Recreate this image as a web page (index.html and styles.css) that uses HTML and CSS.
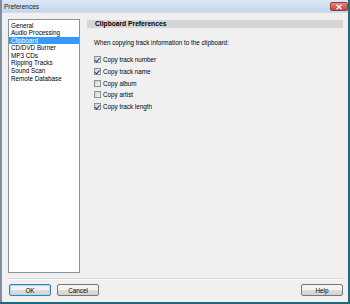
FILE: index.html
```html
<!DOCTYPE html>
<html lang="en">
<head>
  <meta charset="UTF-8" />
  <title>Preferences</title>
  <link rel="stylesheet" href="styles.css">
</head>
<body>
  <div class="window">
    <div class="titlebar">
      <span class="title">Preferences</span>
      <button class="close-btn" aria-label="Close">
        <svg width="8" height="6" viewBox="0 0 8 6"><path d="M1.5 0.8 L6.5 5.2 M6.5 0.8 L1.5 5.2" stroke="#fff" stroke-width="1.4"/></svg>
      </button>
    </div>

    <div class="client">
      <div class="main">
        <ul class="listbox">
          <li>General</li>
          <li>Audio Processing</li>
          <li class="selected">Clipboard</li>
          <li>CD/DVD Burner</li>
          <li>MP3 CDs</li>
          <li>Ripping Tracks</li>
          <li>Sound Scan</li>
          <li>Remote Database</li>
        </ul>

        <div class="panel">
          <div class="panel-header">Clipboard Preferences</div>
          <p class="intro">When copying track information to the clipboard:</p>
          <div class="options">
            <label class="option"><span class="check checked"></span>Copy track number</label>
            <label class="option"><span class="check checked"></span>Copy track name</label>
            <label class="option"><span class="check"></span>Copy album</label>
            <label class="option"><span class="check"></span>Copy artist</label>
            <label class="option"><span class="check checked"></span>Copy track length</label>
          </div>
        </div>
      </div>

      <div class="separator"></div>

      <div class="button-row">
        <div class="left-buttons">
          <button class="btn default">OK</button>
          <button class="btn">Cancel</button>
        </div>
        <button class="btn">Help</button>
      </div>
    </div>
  </div>
</body>
</html>
```

FILE: styles.css
```css
body {
  margin: 0;
  width: 350px;
  height: 304px;
  background: #1d6a7a;
  font-family: "Liberation Sans", Arial, sans-serif;
  font-size: 6.3px;
  color: #000;
  overflow: hidden;
}

.window {
  width: 346px;
  height: 302px;
  border-left: 2px solid #7f8e9e;
  background: #f0f0f0;
  display: flex;
  flex-direction: column;
}

.titlebar {
  height: 12px;
  flex: none;
  display: flex;
  align-items: center;
  justify-content: space-between;
  padding-left: 2px;
  background: linear-gradient(#dce7f4, #c3d6ec);
  border-bottom: 1px solid #cfdcea;
}

.title {
  font-size: 6.5px;
  color: #1a1a1a;
}

.close-btn {
  width: 18px;
  height: 9px;
  margin-top: 1px;
  padding: 0;
  border: 1px solid #9a3a34;
  border-radius: 2px;
  background: linear-gradient(#dd8a80, #c4473c);
  display: flex;
  align-items: center;
  justify-content: center;
}

.client {
  flex: 1;
  display: flex;
  flex-direction: column;
  padding: 6px 5px 0 6px;
}

.main {
  height: 254px;
  display: flex;
  gap: 7px;
}

.listbox {
  width: 70px;
  margin: 0;
  padding: 1.5px 0 0 0;
  list-style: none;
  background: #fff;
  border: 1px solid #8d939b;
}

.listbox li {
  height: 7.6px;
  line-height: 7.6px;
  padding-left: 2px;
  white-space: nowrap;
}

.listbox li.selected {
  background: #3399ff;
  color: #fff;
}

.panel {
  flex: 1;
  padding-top: 0.5px;
}

.panel-header {
  height: 8px;
  line-height: 8px;
  padding-left: 8px;
  background: #d6d6d6;
  font-weight: bold;
  font-size: 6.7px;
}

.intro {
  margin: 11px 0 0 7px;
  line-height: 8px;
}

.options {
  margin: 7.7px 0 0 7px;
  display: flex;
  flex-direction: column;
}

.option {
  height: 11.6px;
  display: flex;
  align-items: center;
  gap: 2px;
}

.check {
  width: 5px;
  height: 5px;
  border: 1px solid #8e8f8f;
  background: linear-gradient(135deg, #d2d2d2, #f6f6f6);
  display: flex;
  align-items: center;
  justify-content: center;
}

.check.checked {
  background: linear-gradient(135deg, #c9d6e6, #f4f7fb) ;
}

.check.checked::after {
  content: "";
  width: 1.5px;
  height: 3.5px;
  margin-top: -1px;
  border: solid #23389a;
  border-width: 0 1.2px 1.2px 0;
  transform: rotate(40deg);
}

.separator {
  margin-top: 5px;
  height: 1px;
  border-top: 1px solid #d9d9d9;
  background: #fcfcfc;
}

.button-row {
  margin-top: 4px;
  display: flex;
  justify-content: space-between;
  padding-left: 1px;
}

.left-buttons {
  display: flex;
  gap: 6px;
}

.btn {
  width: 42px;
  height: 12px;
  padding: 0;
  font-family: "Liberation Sans", Arial, sans-serif;
  font-size: 6.3px;
  color: #000;
  border: 1px solid #777;
  border-radius: 2px;
  background: linear-gradient(#f3f3f3 50%, #dddddd 50%, #d3d3d3);
}

.btn.default {
  border-color: #3c7fb1;
  box-shadow: inset 0 0 0 1px #a8dbf5;
}
```
